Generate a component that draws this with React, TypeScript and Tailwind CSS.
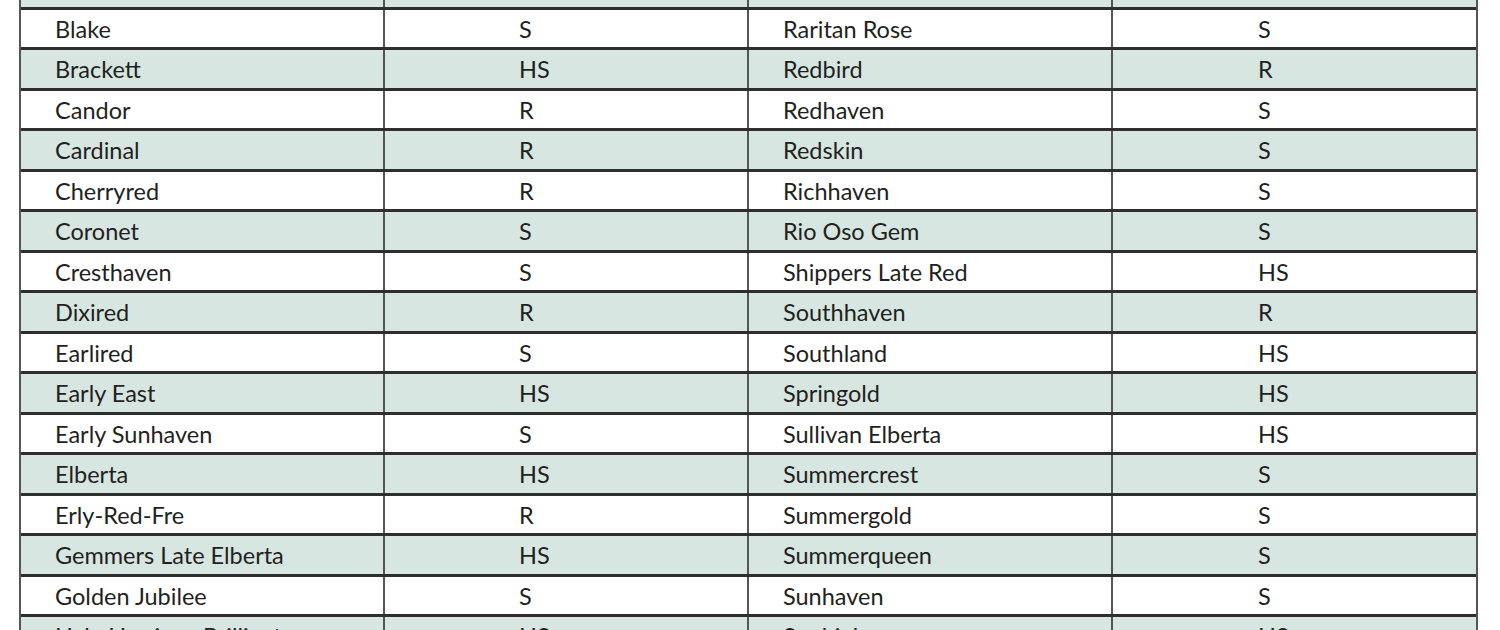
const rows: [string, string, string, string][] = [
  ["", "", "", ""],
  ["Blake", "S", "Raritan Rose", "S"],
  ["Brackett", "HS", "Redbird", "R"],
  ["Candor", "R", "Redhaven", "S"],
  ["Cardinal", "R", "Redskin", "S"],
  ["Cherryred", "R", "Richhaven", "S"],
  ["Coronet", "S", "Rio Oso Gem", "S"],
  ["Cresthaven", "S", "Shippers Late Red", "HS"],
  ["Dixired", "R", "Southhaven", "R"],
  ["Earlired", "S", "Southland", "HS"],
  ["Early East", "HS", "Springold", "HS"],
  ["Early Sunhaven", "S", "Sullivan Elberta", "HS"],
  ["Elberta", "HS", "Summercrest", "S"],
  ["Erly-Red-Fre", "R", "Summergold", "S"],
  ["Gemmers Late Elberta", "HS", "Summerqueen", "S"],
  ["Golden Jubilee", "S", "Sunhaven", "S"],
  ["Hale Harrison Brilliant", "HS", "Sunhigh", "HS"],
];

export default function App() {
  return (
    <div
      className="w-[1500px] h-[630px] overflow-hidden bg-white text-[#231f20]"
      style={{ fontFamily: "Lato, 'Open Sans', sans-serif" }}
    >
      <div className="ml-[19px] w-[1459px] -mt-[31px] border-x-2 border-[#555]">
        {rows.map((r, i) => (
          <div
            key={i}
            className={`grid grid-cols-[362px_364px_364px_365px] h-[40.53px] border-b-[3px] border-[#2e2e2e] text-[23.5px] leading-none ${
              i % 2 === 0 ? "bg-[#d7e6e1]" : "bg-white"
            }`}
          >
            <div className="flex items-center pl-[34px] pt-[2px]">{r[0]}</div>
            <div className="flex items-center pl-[134px] pt-[2px] border-l-2 border-[#555]">{r[1]}</div>
            <div className="flex items-center pl-[34px] pt-[2px] border-l-2 border-[#555]">{r[2]}</div>
            <div className="flex items-center pl-[145px] pt-[2px] border-l-2 border-[#555]">{r[3]}</div>
          </div>
        ))}
      </div>
    </div>
  );
}
